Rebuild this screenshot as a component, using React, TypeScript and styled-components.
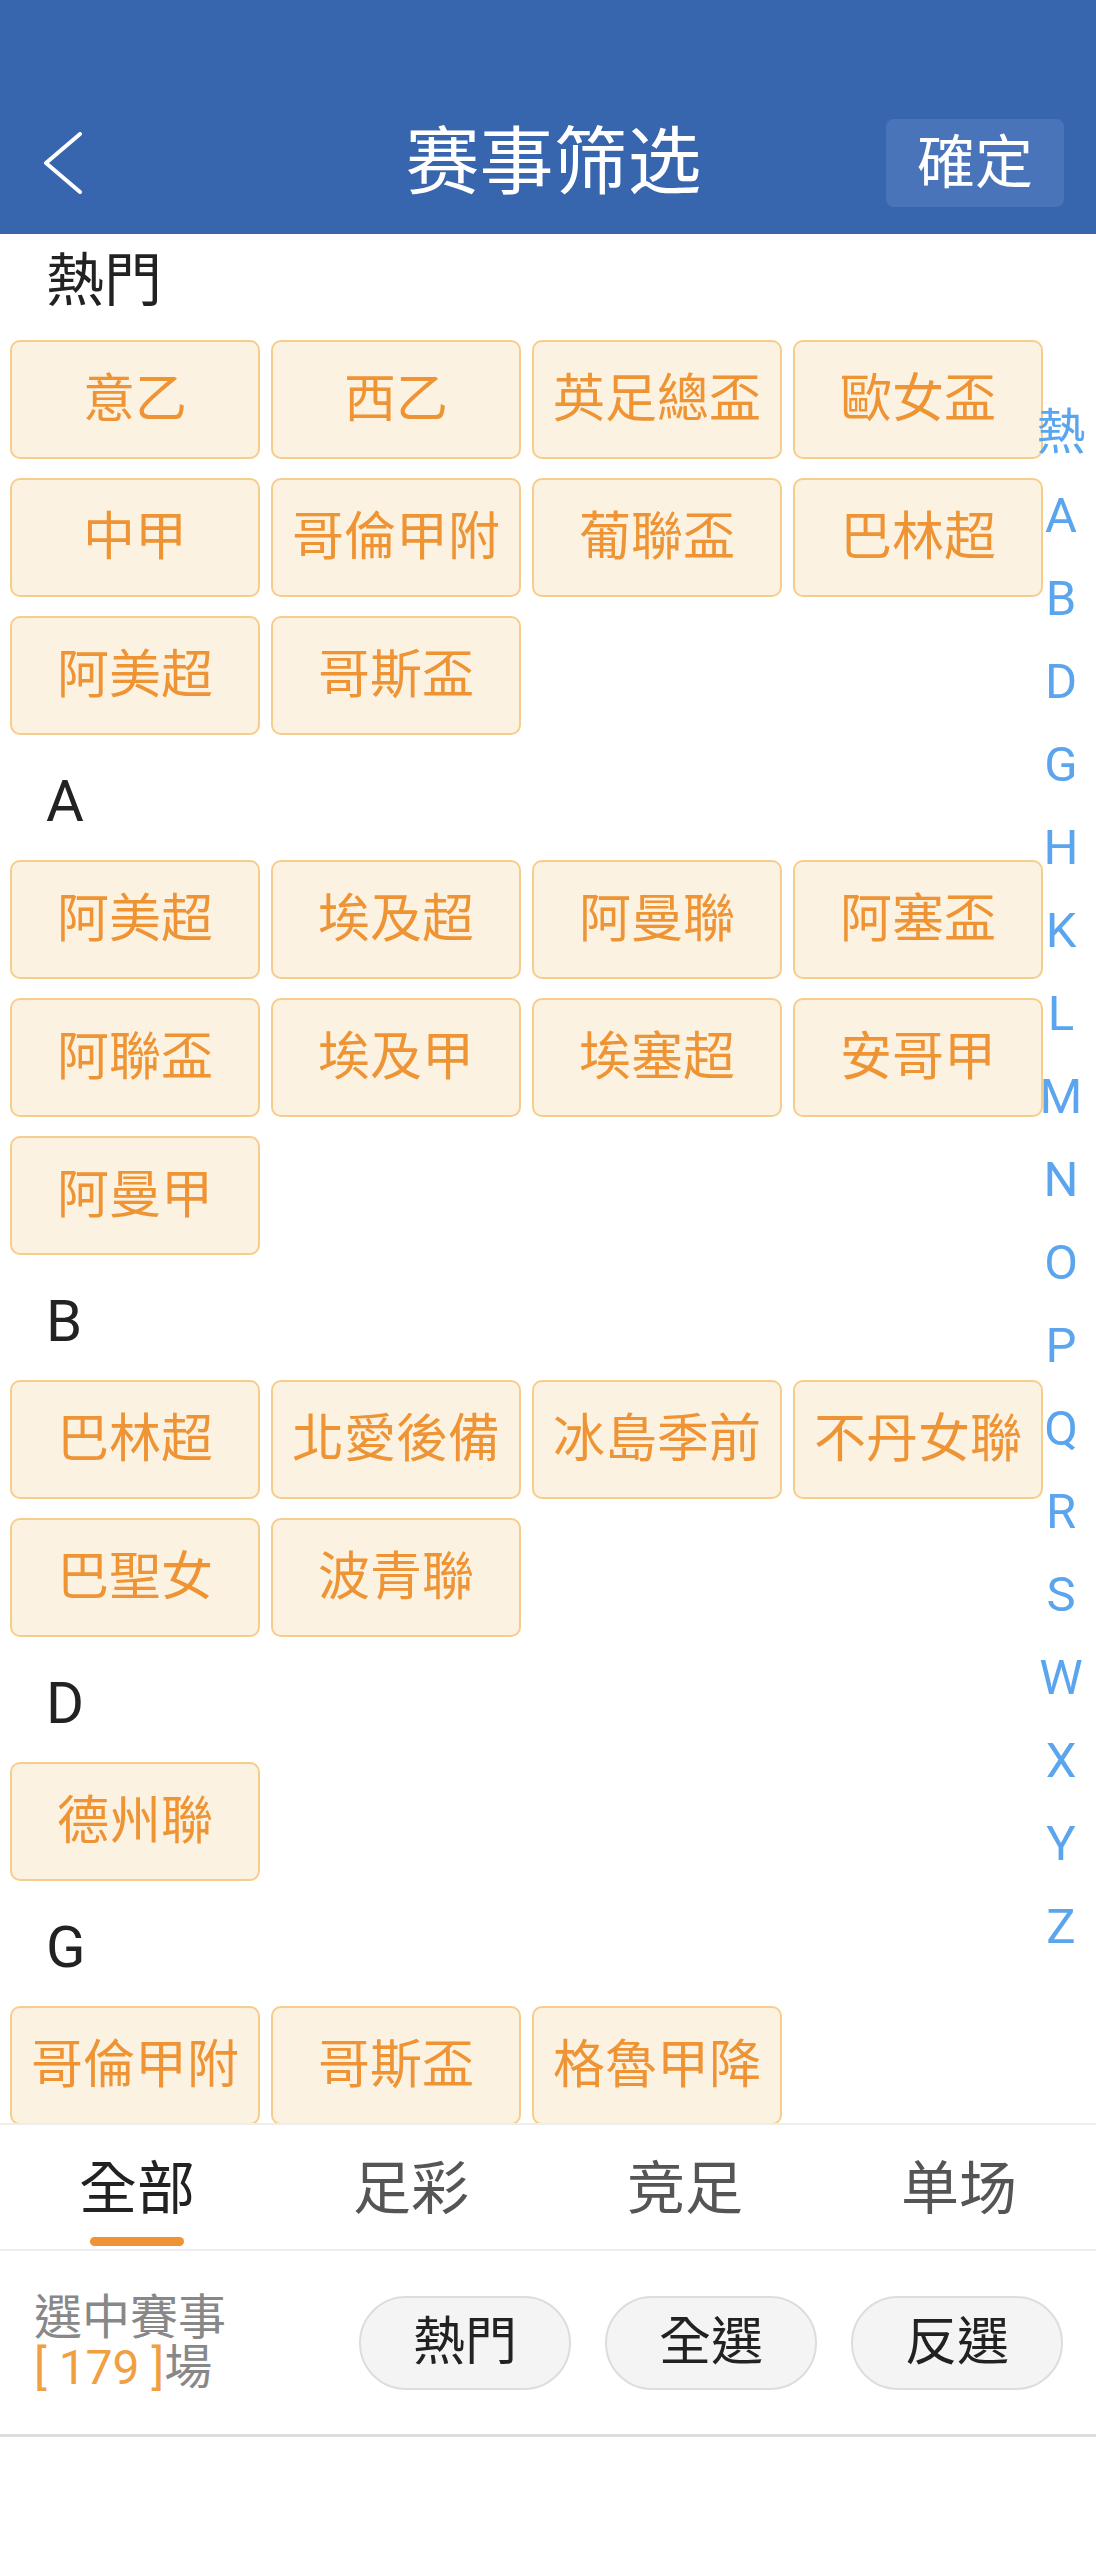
import React, { useState } from 'react';
import styled, { createGlobalStyle } from 'styled-components';

// --- Global --- //
const GlobalStyle = createGlobalStyle`
  html, body {
    margin: 0;
    padding: 0;
    background: #ffffff;
  }
  body {
    font-family: Roboto, "Noto Sans CJK TC", "Noto Sans CJK SC", sans-serif;
  }
  * {
    box-sizing: border-box;
  }
`;

// --- Styled-component --- //
const Screen = styled.div`
  width: 1096px;
  height: 2560px;
  display: flex;
  flex-direction: column;
  background: #ffffff;
`;

const Header = styled.header`
  flex: 0 0 234px;
  background: #3866ae;
  padding: 92px 32px 0 43px;
`;

const HeaderRow = styled.div`
  height: 142px;
  display: grid;
  grid-template-columns: 1fr auto 1fr;
  align-items: center;
`;

const BackButton = styled.button`
  justify-self: start;
  display: flex;
  align-items: center;
  padding: 0;
  border: none;
  background: transparent;
  cursor: pointer;
`;

const Title = styled.h1`
  margin: 0;
  font-size: 74px;
  font-weight: 400;
  line-height: 1;
  color: #ffffff;
`;

const ConfirmButton = styled.button`
  justify-self: end;
  width: 178px;
  height: 88px;
  border: none;
  border-radius: 8px;
  background: #4a74b9;
  color: #ffffff;
  font-family: inherit;
  font-size: 58px;
  line-height: 1;
  padding: 0;
  cursor: pointer;
`;

const Body = styled.main`
  position: relative;
  flex: 0 0 1889px;
  overflow: hidden;
`;

const List = styled.div`
  height: 100%;
  overflow-y: auto;
  scrollbar-width: none;
`;

const Section = styled.section`
  display: flex;
  flex-direction: column;
`;

const SectionLabel = styled.div`
  height: 106px;
  display: flex;
  align-items: center;
  padding: 0 0 12px 46px;
  font-size: 58px;
  line-height: 1;
  color: #222222;
`;

const LeagueGrid = styled.div`
  display: grid;
  grid-template-columns: repeat(4, 250px);
  grid-auto-rows: 119px;
  column-gap: 11px;
  row-gap: 19px;
  padding: 0 0 19px 10px;
`;

const LeagueButton = styled.button<{ $active?: boolean }>`
  display: flex;
  align-items: center;
  justify-content: center;
  padding: 0;
  border: 2px solid #f7cd8c;
  border-radius: 10px;
  background: ${(p) => (p.$active ? '#fcf2e1' : '#ffffff')};
  color: #ee9434;
  font-family: inherit;
  font-size: 52px;
  line-height: 1;
  white-space: nowrap;
  cursor: pointer;
`;

const IndexBar = styled.nav`
  position: absolute;
  right: 0;
  top: 50%;
  transform: translateY(-50%);
  width: 70px;
  display: flex;
  flex-direction: column;
`;

const IndexItem = styled.span`
  height: 83px;
  display: flex;
  align-items: center;
  justify-content: center;
  font-size: 49px;
  line-height: 1;
  color: #5ba5ee;
`;

const TabBar = styled.div`
  flex: 0 0 128px;
  display: flex;
  border-top: 2px solid #eeeeee;
  border-bottom: 2px solid #eeeeee;
`;

const Tab = styled.div<{ $active?: boolean }>`
  flex: 1 1 0;
  display: flex;
  flex-direction: column;
  align-items: center;
  padding-top: 29px;
  font-size: 58px;
  line-height: 70px;
  color: ${(p) => (p.$active ? '#222222' : '#555555')};
  cursor: pointer;
`;

const TabIndicator = styled.div<{ $active?: boolean }>`
  width: 94px;
  height: 9px;
  margin-top: 13px;
  border-radius: 5px;
  background: ${(p) => (p.$active ? '#ee9434' : 'transparent')};
`;

const ActionBar = styled.div`
  flex: 0 0 186px;
  display: flex;
  align-items: center;
  justify-content: space-between;
  padding: 0 33px 0 34px;
  border-bottom: 3px solid #dddddd;
`;

const Summary = styled.div`
  display: flex;
  flex-direction: column;
  font-size: 48px;
  line-height: 50px;
  color: #888888;
`;

const SummaryLine = styled.span`
  display: block;
  white-space: nowrap;
`;

const Count = styled.span`
  color: #f0a040;
`;

const ActionGroup = styled.div`
  display: flex;
  gap: 34px;
`;

const PillButton = styled.button`
  width: 212px;
  height: 94px;
  border: 2px solid #dddddd;
  border-radius: 47px;
  background: #f4f4f4;
  color: #222222;
  font-family: inherit;
  font-size: 52px;
  line-height: 1;
  padding: 0;
  cursor: pointer;
`;

// --- Data --- //
const sections: { key: string; label: string; leagues: string[] }[] = [
  {
    key: '熱',
    label: '熱門',
    leagues: ['意乙', '西乙', '英足總盃', '歐女盃', '中甲', '哥倫甲附', '葡聯盃', '巴林超', '阿美超', '哥斯盃'],
  },
  {
    key: 'A',
    label: 'A',
    leagues: ['阿美超', '埃及超', '阿曼聯', '阿塞盃', '阿聯盃', '埃及甲', '埃塞超', '安哥甲', '阿曼甲'],
  },
  { key: 'B', label: 'B', leagues: ['巴林超', '北愛後備', '冰島季前', '不丹女聯', '巴聖女', '波青聯'] },
  { key: 'D', label: 'D', leagues: ['德州聯'] },
  { key: 'G', label: 'G', leagues: ['哥倫甲附', '哥斯盃', '格魯甲降'] },
];

const indexKeys = ['熱', 'A', 'B', 'D', 'G', 'H', 'K', 'L', 'M', 'N', 'O', 'P', 'Q', 'R', 'S', 'W', 'X', 'Y', 'Z'];

const tabs = ['全部', '足彩', '竞足', '单场'];

export default function App() {
  const [activeTab, setActiveTab] = useState(0);

  return (
    <Screen>
      <GlobalStyle />
      <Header>
        <HeaderRow>
          <BackButton aria-label="返回">
            <svg width="40" height="62" viewBox="0 0 40 62" fill="none">
              <polyline
                points="37,2 3,31 37,60"
                stroke="#ffffff"
                strokeWidth="4"
                strokeLinecap="round"
                strokeLinejoin="round"
              />
            </svg>
          </BackButton>
          <Title>赛事筛选</Title>
          <ConfirmButton>確定</ConfirmButton>
        </HeaderRow>
      </Header>

      <Body>
        <List>
          {sections.map((section) => (
            <Section key={section.key}>
              <SectionLabel>{section.label}</SectionLabel>
              <LeagueGrid>
                {section.leagues.map((name, i) => (
                  <LeagueButton key={name + i} $active>
                    {name}
                  </LeagueButton>
                ))}
              </LeagueGrid>
            </Section>
          ))}
        </List>
        <IndexBar>
          {indexKeys.map((k) => (
            <IndexItem key={k}>{k}</IndexItem>
          ))}
        </IndexBar>
      </Body>

      <TabBar>
        {tabs.map((t, i) => (
          <Tab key={t} $active={i === activeTab} onClick={() => setActiveTab(i)}>
            {t}
            <TabIndicator $active={i === activeTab} />
          </Tab>
        ))}
      </TabBar>

      <ActionBar>
        <Summary>
          <SummaryLine>選中賽事</SummaryLine>
          <SummaryLine>
            <Count>[ 179 ]</Count>場
          </SummaryLine>
        </Summary>
        <ActionGroup>
          <PillButton>熱門</PillButton>
          <PillButton>全選</PillButton>
          <PillButton>反選</PillButton>
        </ActionGroup>
      </ActionBar>
    </Screen>
  );
}
